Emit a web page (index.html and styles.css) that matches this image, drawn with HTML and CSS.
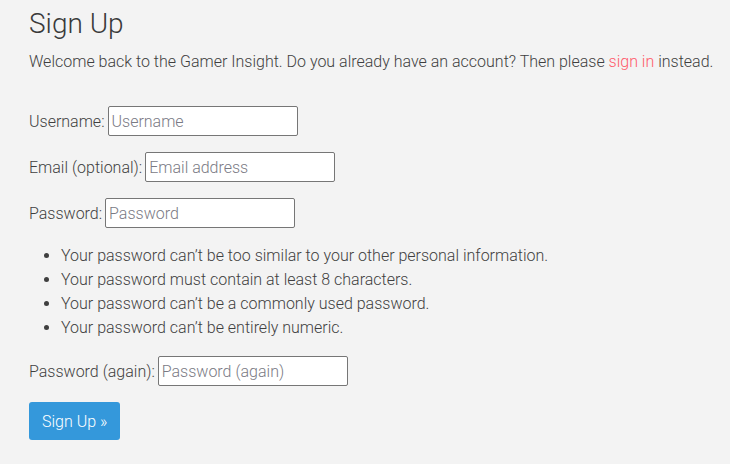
FILE: index.html
```html
<!DOCTYPE html>
<html>
<head>
<meta charset="utf-8">
<link rel="stylesheet" href="styles.css">
</head>
<body>
<main class="page">
  <h1 class="title">Sign Up</h1>
  <p class="intro">Welcome back to the Gamer Insight. Do you already have an account? Then please <a class="link" href="#">sign in</a> instead.</p>
  <form class="form">
    <p class="row"><label class="label" for="u">Username:</label> <input class="field" id="u" type="text" placeholder="Username"></p>
    <p class="row"><label class="label" for="e">Email (optional):</label> <input class="field" id="e" type="text" placeholder="Email address"></p>
    <p class="row"><label class="label" for="p">Password:</label> <input class="field" id="p" type="password" placeholder="Password"></p>
    <ul class="help">
      <li>Your password can’t be too similar to your other personal information.</li>
      <li>Your password must contain at least 8 characters.</li>
      <li>Your password can’t be a commonly used password.</li>
      <li>Your password can’t be entirely numeric.</li>
    </ul>
    <p class="row"><label class="label" for="p2">Password (again):</label> <input class="field" id="p2" type="password" placeholder="Password (again)"></p>
    <button class="btn" type="button">Sign Up »</button>
  </form>
</main>
</body>
</html>
```
FILE: styles.css
```css
html, body {
  margin: 0;
  background: #f3f3f3;
}
.page {
  padding: 0 0 0 29px;
  font-family: Roboto, "Liberation Sans", sans-serif;
  font-size: 16px;
  font-weight: 300;
  color: #3f3f3f;
}
.title {
  font-weight: 300;
  font-size: 28px;
  margin: 6px 0 0;
  line-height: 36px;
  color: #3a3a3a;
}
.intro {
  margin: 8px 0 0;
  line-height: 24px;
}
.link {
  color: #ff5a6a;
  text-decoration: none;
}
.form {
  margin-top: 32px;
}
.row {
  margin: 0 0 16px;
  height: 30px;
  display: flex;
  align-items: center;
}
.label {
  margin-right: 3px;
}
.field {
  width: 190px;
  height: 30px;
  box-sizing: border-box;
  border: 1px solid #767676;
  border-radius: 2px;
  background: #fff;
  padding: 0 3px;
  font-family: Roboto, "Liberation Sans", sans-serif;
  font-size: 16px;
  font-weight: 300;
  color: #3f3f3f;
}
.field::placeholder {
  color: #7a7a84;
}
.help {
  margin: 12px 0 16px;
  padding-left: 32px;
  line-height: 24px;
}
.btn {
  background: #3498db;
  color: #fff;
  border: none;
  border-radius: 3px;
  height: 38px;
  padding: 0 13px;
  font-family: Roboto, "Liberation Sans", sans-serif;
  font-size: 16px;
  font-weight: 300;
}
```
